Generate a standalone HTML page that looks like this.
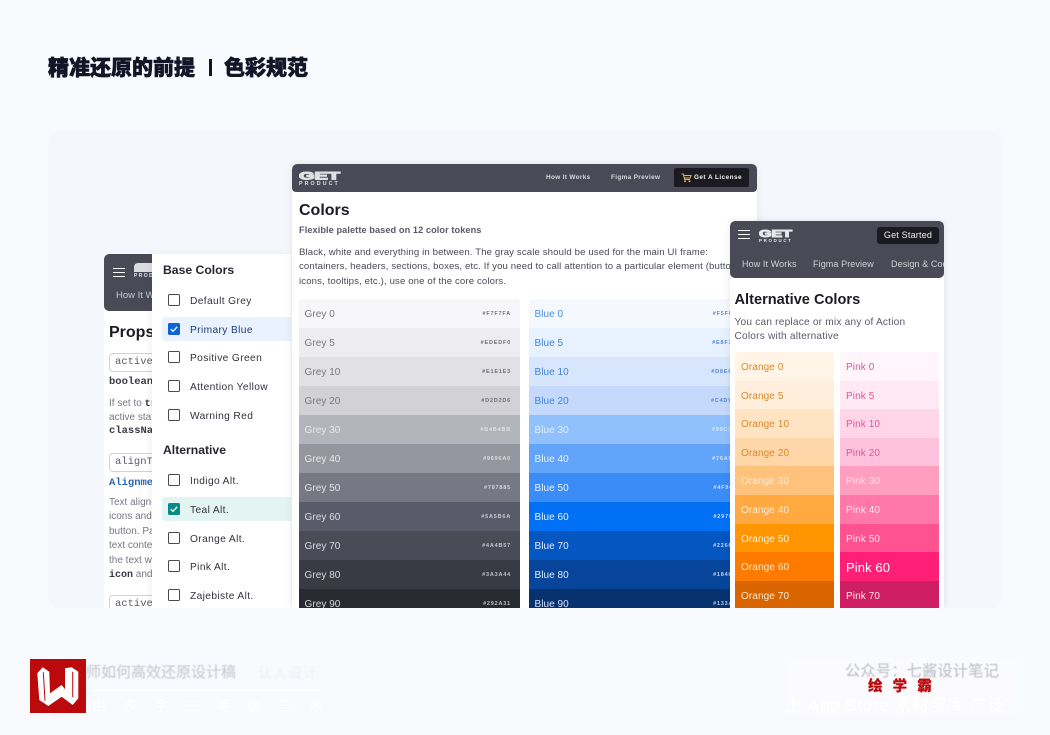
<!DOCTYPE html>
<html lang="zh"><head><meta charset="utf-8"><title>色彩规范</title>
<style>
*{margin:0;padding:0;box-sizing:border-box}
html,body{width:1050px;height:735px;overflow:hidden;background:#f9fafe}
body{position:relative;font-family:"Liberation Sans","Noto Sans CJK SC",sans-serif;color:#1b1b22}
.a{position:absolute;white-space:nowrap}
.panel{position:absolute;left:48px;top:131px;width:954px;height:477px;background:#f6f7fc;border-radius:12px;overflow:hidden}
.card{position:absolute;background:#fff;overflow:hidden}
.hd{position:absolute;background:#4a4a57;border-radius:5px}
.row{position:absolute;height:29px;font-size:10px;line-height:31px;padding-left:5.5px;letter-spacing:.05px}
.row b{position:absolute;right:9px;top:0;font-size:5.5px;letter-spacing:.8px;font-weight:700;opacity:.85}
.w .row{line-height:32px;padding-left:6px;font-size:10px;letter-spacing:.1px}
.cb{position:absolute;left:16px;width:12px;height:12px;border:1.3px solid #4a4a57;border-radius:1.5px;background:#fff}
.lb{position:absolute;left:38px;font-size:10.2px;letter-spacing:.38px;color:#32323c;line-height:14px}
.sel{position:absolute;left:10px;width:129px;height:24px;border-radius:3px 0 0 3px}
.mono{font-family:"Liberation Mono",monospace}
.pill{position:absolute;left:5px;width:70px;height:19px;border:1px solid #d2d2d6;border-radius:4px;font-family:"Liberation Mono",monospace;font-size:10.5px;color:#5a5a6a;padding-left:5px;line-height:17px}
.t{position:absolute;left:5px;font-size:10px;color:#787885;line-height:14px;white-space:nowrap}
</style></head><body>

<div class="a" style="left:48px;top:53px;font-size:21px;line-height:28px;font-weight:900;color:#111526;-webkit-text-stroke:.6px #111526;font-family:'Noto Sans CJK SC',sans-serif">精准还原的前提</div>
<div class="a" style="left:209px;top:59px;width:3px;height:17px;background:#111526"></div>
<div class="a" style="left:224px;top:53px;font-size:21px;line-height:28px;font-weight:900;color:#111526;-webkit-text-stroke:.6px #111526;font-family:'Noto Sans CJK SC',sans-serif">色彩规范</div>

<div class="panel">
<!-- left card -->
<div class="card" style="left:56px;top:123px;width:120px;height:354px;border-radius:5px 0 0 0">
  <div class="hd" style="left:0;top:0;width:120px;height:57px"></div>
  <div class="a" style="left:9px;top:14px;width:12px;height:9px;border-top:1.3px solid #fff;border-bottom:1.3px solid #fff"></div>
  <div class="a" style="left:9px;top:18px;width:12px;height:1.3px;background:#fff"></div>
  <div class="a" style="left:30px;top:9px;width:24px;height:9px;background:#dcdce0;border-radius:4px 1px 0 0"></div>
  <div class="a" style="left:30px;top:19px;font-size:5px;font-weight:700;letter-spacing:1.4px;color:#e1e1e3">PRODUCT</div>
  <div class="a" style="left:12px;top:36px;font-size:9.5px;color:#c9c9d0">How It Works</div>
  <div class="a" style="left:5px;top:69px;font-size:16px;font-weight:700;line-height:20px;color:#1b1b22">Props</div>
  <div class="pill" style="top:99px">active</div>
  <div class="a mono" style="left:5px;top:122px;font-size:10.5px;font-weight:700;color:#3a3a44">boolean</div>
  <div class="t" style="top:143px">If set to <b class="mono" style="color:#3a3a44">true</b></div>
  <div class="t" style="top:157px">active state</div>
  <div class="a mono" style="left:5px;top:171px;font-size:10.5px;font-weight:700;color:#3a3a44">className</div>
  <div class="pill" style="top:199px">alignText</div>
  <div class="a mono" style="left:5px;top:223px;font-size:10.5px;font-weight:700;color:#2b66b8">Alignment</div>
  <div class="t" style="top:242px">Text alignment</div>
  <div class="t" style="top:256px">icons and</div>
  <div class="t" style="top:271px">button. Pass</div>
  <div class="t" style="top:285px">text content</div>
  <div class="t" style="top:300px">the text will</div>
  <div class="t" style="top:314px"><b class="mono" style="color:#3a3a44">icon</b> and</div>
  <div class="pill" style="top:341px">active</div>
</div>

<!-- sidebar -->
<div class="card" style="left:104px;top:123px;width:139px;height:354px;box-shadow:-2px 0 6px rgba(60,60,80,.07)">
  <div class="a" style="left:11px;top:9px;font-size:12.2px;font-weight:700;line-height:15px;color:#26262e">Base Colors</div>
  <div class="cb" style="top:40px"></div><div class="lb" style="top:41px">Default Grey</div>
  <div class="sel" style="top:63px;background:#e9f2fe"></div>
  <div class="cb" style="top:69px;background:#0f62d6;border-color:#0f62d6"><svg width="10" height="10" viewBox="0 0 10 10" style="position:absolute;left:0;top:0"><path d="M1.8 5.2 4 7.3 8.2 2.8" fill="none" stroke="#fff" stroke-width="1.3"/></svg></div><div class="lb" style="top:70px;color:#1f3f75">Primary Blue</div>
  <div class="cb" style="top:97px"></div><div class="lb" style="top:98px">Positive Green</div>
  <div class="cb" style="top:126px"></div><div class="lb" style="top:127px">Attention Yellow</div>
  <div class="cb" style="top:155px"></div><div class="lb" style="top:156px">Warning Red</div>
  <div class="a" style="left:11px;top:189px;font-size:12.2px;font-weight:700;line-height:15px;color:#26262e">Alternative</div>
  <div class="cb" style="top:220px"></div><div class="lb" style="top:221px">Indigo Alt.</div>
  <div class="sel" style="top:243px;background:#e3f5f3"></div>
  <div class="cb" style="top:249px;background:#0c8a85;border-color:#0c8a85"><svg width="10" height="10" viewBox="0 0 10 10" style="position:absolute;left:0;top:0"><path d="M1.8 5.2 4 7.3 8.2 2.8" fill="none" stroke="#fff" stroke-width="1.3"/></svg></div><div class="lb" style="top:250px">Teal Alt.</div>
  <div class="cb" style="top:278px"></div><div class="lb" style="top:279px">Orange Alt.</div>
  <div class="cb" style="top:306px"></div><div class="lb" style="top:307px">Pink Alt.</div>
  <div class="cb" style="top:335px"></div><div class="lb" style="top:336px">Zajebiste Alt.</div>
</div>

<!-- center card -->
<div class="card" style="left:244px;top:33px;width:465px;height:444px;border-radius:5px 5px 0 0;box-shadow:0 0 8px rgba(60,60,80,.1)">
  <div class="hd" style="left:0;top:0;width:465px;height:28px;border-radius:5px 5px 4px 4px"></div>
  <svg class="a" style="left:7px;top:5px" width="42" height="12" viewBox="0 0 42 12"><text x="0" y="10.5" font-family="Liberation Sans" font-size="11" font-weight="700" fill="#e1e1e3" stroke="#e1e1e3" stroke-width="1.1" textLength="41" lengthAdjust="spacingAndGlyphs">GET</text></svg>
  <div class="a" style="left:7px;top:17px;font-size:5.3px;line-height:7px;font-weight:700;letter-spacing:2.1px;color:#e1e1e3">PRODUCT</div>
  <div class="a" style="left:254px;top:10px;font-size:6.4px;line-height:8px;font-weight:700;letter-spacing:.35px;color:#d8d8de">How It Works</div>
  <div class="a" style="left:319px;top:10px;font-size:6.4px;line-height:8px;font-weight:700;letter-spacing:.35px;color:#d8d8de">Figma Preview</div>
  <div class="a" style="left:382px;top:4px;width:75px;height:19px;background:#1a1a20;border-radius:2px"></div>
  <svg class="a" style="left:389px;top:9px" width="11" height="10" viewBox="0 0 11 10"><path d="M.5 1H2.3L3.6 6.5H9M2.7 2.5H10L9.2 5H3.3" fill="none" stroke="#e8b44a" stroke-width="1"/><circle cx="4" cy="8.3" r="1" fill="#e8b44a"/><circle cx="8.5" cy="8.3" r="1" fill="#e8b44a"/></svg>
  <div class="a" style="left:402px;top:10px;font-size:6.4px;line-height:8px;font-weight:700;letter-spacing:.45px;color:#f0f0f2">Get A License</div>
  <div class="a" style="left:7px;top:37px;font-size:16px;line-height:20px;font-weight:700;color:#1b1b22">Colors</div>
  <div class="a" style="left:7px;top:60px;font-size:9.2px;line-height:12px;font-weight:700;color:#5a5a6a;letter-spacing:.08px">Flexible palette based on 12 color tokens</div>
  <div class="a" style="left:7px;top:82px;font-size:9.6px;line-height:14.4px;color:#4a4a57;letter-spacing:.13px">Black, white and everything in between. The gray scale should be used for the main UI frame:<br>containers, headers, sections, boxes, etc. If you need to call attention to a particular element (buttons,<br>icons, tooltips, etc.), use one of the core colors.</div>

  <div class="a" style="left:7px;top:135px;width:221px;height:309px;overflow:hidden;border-radius:3px 3px 0 0">
    <div class="row" style="top:0;width:221px;background:#f7f7fa;color:#787885">Grey 0<b style="color:#5a5a6a">#F7F7FA</b></div>
    <div class="row" style="top:29px;width:221px;background:#edEDf0;color:#787885">Grey 5<b style="color:#5a5a6a">#EDEDF0</b></div>
    <div class="row" style="top:58px;width:221px;background:#e1e1e3;color:#787885">Grey 10<b style="color:#5a5a6a">#E1E1E3</b></div>
    <div class="row" style="top:87px;width:221px;background:#d2d2d6;color:#787885">Grey 20<b style="color:#5a5a6a">#D2D2D6</b></div>
    <div class="row" style="top:116px;width:221px;background:#b4b4bb;color:#e8e8ed">Grey 30<b>#B4B4BB</b></div>
    <div class="row" style="top:145px;width:221px;background:#9696a0;color:#e6e6ea">Grey 40<b>#9696A0</b></div>
    <div class="row" style="top:174px;width:221px;background:#787885;color:#e2e2e6">Grey 50<b>#787885</b></div>
    <div class="row" style="top:203px;width:221px;background:#5a5b6a;color:#dcdce2">Grey 60<b>#5A5B6A</b></div>
    <div class="row" style="top:232px;width:221px;background:#4a4b57;color:#dcdce2">Grey 70<b>#4A4B57</b></div>
    <div class="row" style="top:261px;width:221px;background:#3a3a44;color:#d8d8de">Grey 80<b>#3A3A44</b></div>
    <div class="row" style="top:290px;width:221px;background:#292a31;color:#d8d8de">Grey 90<b>#292A31</b></div>
  </div>
  <div class="a" style="left:237px;top:135px;width:221px;height:309px;overflow:hidden;border-radius:3px 3px 0 0">
    <div class="row" style="top:0;width:221px;background:#f5f8ff;color:#4a8ee6">Blue 0<b style="color:#3a78d0">#F5F8FF</b></div>
    <div class="row" style="top:29px;width:221px;background:#e8f1fe;color:#3f84e0">Blue 5<b style="color:#3a78d0">#E8F1FE</b></div>
    <div class="row" style="top:58px;width:221px;background:#d8e6fd;color:#3f84e0">Blue 10<b style="color:#3a78d0">#D8E6FD</b></div>
    <div class="row" style="top:87px;width:221px;background:#c4d9fc;color:#3f84e0">Blue 20<b style="color:#3a78d0">#C4D9FC</b></div>
    <div class="row" style="top:116px;width:221px;background:#90c1fc;color:#e0eeff">Blue 30<b>#90C1FC</b></div>
    <div class="row" style="top:145px;width:221px;background:#62a4fa;color:#e6f0ff">Blue 40<b>#76A9FA</b></div>
    <div class="row" style="top:174px;width:221px;background:#3c8cf8;color:#e6f0ff">Blue 50<b>#4F94F8</b></div>
    <div class="row" style="top:203px;width:221px;background:#0270f5;color:#e6f0ff">Blue 60<b>#2979FF</b></div>
    <div class="row" style="top:232px;width:221px;background:#0556c0;color:#dfeaff">Blue 70<b>#2266C0</b></div>
    <div class="row" style="top:261px;width:221px;background:#06459a;color:#dfeaff">Blue 80<b>#1846A0</b></div>
    <div class="row" style="top:290px;width:221px;background:#07316f;color:#d8e4fa">Blue 90<b>#133A70</b></div>
  </div>
</div>

<!-- right card -->
<div class="card" style="left:682px;top:90px;width:214px;height:387px;border-radius:5px 5px 0 0;box-shadow:0 0 7px rgba(60,60,80,.12)">
  <div class="hd" style="left:0;top:0;width:214px;height:57px"></div>
  <div class="a" style="left:8px;top:9px;width:12px;height:9px;border-top:1.2px solid #fff;border-bottom:1.2px solid #fff"></div>
  <div class="a" style="left:8px;top:13px;width:12px;height:1.2px;background:#fff"></div>
  <svg class="a" style="left:29px;top:7px" width="34" height="10" viewBox="0 0 34 10"><text x="0" y="9" font-family="Liberation Sans" font-size="10" font-weight="700" fill="#e8e8ec" stroke="#e8e8ec" stroke-width="1" textLength="33" lengthAdjust="spacingAndGlyphs">GET</text></svg>
  <div class="a" style="left:29px;top:17px;font-size:4.4px;line-height:6px;font-weight:700;letter-spacing:1.7px;color:#e8e8ec">PRODUCT</div>
  <div class="a" style="left:147px;top:6px;width:62px;height:17px;background:#1a1a20;border-radius:3px;color:#f0f0f2;font-size:9px;line-height:16px;text-align:center;letter-spacing:.2px">Get Started</div>
  <div class="a" style="left:12px;top:37px;font-size:9px;line-height:12px;letter-spacing:.1px;color:#d2d2d8">How It Works</div>
  <div class="a" style="left:83px;top:37px;font-size:9px;line-height:12px;letter-spacing:.1px;color:#d2d2d8">Figma Preview</div>
  <div class="a" style="left:161px;top:37px;font-size:9px;line-height:12px;letter-spacing:.1px;color:#d2d2d8;width:53px;overflow:hidden">Design &amp; Code</div>
  <div class="a" style="left:4.5px;top:69px;font-size:14.6px;line-height:18px;font-weight:700;color:#1b1b22;padding-top:1px">Alternative Colors</div>
  <div class="a" style="left:4.5px;top:94px;font-size:10.1px;line-height:14.4px;letter-spacing:.22px;color:#5a5a6a;padding-top:1px">You can replace or mix any of Action<br>Colors with alternative</div>

  <div class="a w" style="left:5px;top:131px;width:99px;height:256px;overflow:hidden;border-radius:3px 3px 0 0">
    <div class="row" style="top:0;width:99px;height:29px;background:#fff4e6;color:#d98a2e">Orange 0</div>
    <div class="row" style="top:28.6px;width:99px;background:#ffeedb;color:#d98a2e">Orange 5</div>
    <div class="row" style="top:57.2px;width:99px;background:#ffe3c2;color:#d98a2e">Orange 10</div>
    <div class="row" style="top:85.8px;width:99px;background:#ffd6a8;color:#d98a2e">Orange 20</div>
    <div class="row" style="top:114.4px;width:99px;background:#ffc27c;color:#ffe9cf">Orange 30</div>
    <div class="row" style="top:143px;width:99px;background:#ffa940;color:#ffeeda">Orange 40</div>
    <div class="row" style="top:171.6px;width:99px;background:#ff9500;color:#fff0dc">Orange 50</div>
    <div class="row" style="top:200.2px;width:99px;background:#ff7b00;color:#ffe6c8">Orange 60</div>
    <div class="row" style="top:228.8px;width:99px;background:#d96500;color:#ffe6c8">Orange 70</div>
  </div>
  <div class="a w" style="left:110px;top:131px;width:99px;height:256px;overflow:hidden;border-radius:3px 3px 0 0">
    <div class="row" style="top:0;width:99px;background:#fff5fa;color:#e0569a">Pink 0</div>
    <div class="row" style="top:28.6px;width:99px;background:#ffe9f3;color:#e0569a">Pink 5</div>
    <div class="row" style="top:57.2px;width:99px;background:#ffd6e8;color:#e0569a">Pink 10</div>
    <div class="row" style="top:85.8px;width:99px;background:#ffc2dc;color:#e0569a">Pink 20</div>
    <div class="row" style="top:114.4px;width:99px;background:#ff9ebf;color:#ffe3ee">Pink 30</div>
    <div class="row" style="top:143px;width:99px;background:#ff78a8;color:#ffe8f1">Pink 40</div>
    <div class="row" style="top:171.6px;width:99px;background:#ff5290;color:#ffe8f1">Pink 50</div>
    <div class="row" style="top:200.2px;width:99px;background:#ff1f76;color:#fff;font-size:13px">Pink 60</div>
    <div class="row" style="top:228.8px;width:99px;background:#d01e64;color:#ffe8f1">Pink 70</div>
  </div>
</div>
</div>

<!-- footer -->
<div class="a" style="left:785px;top:657px;width:235px;height:60px;background:rgba(255,255,255,.3);filter:blur(3px)"></div>
<div class="a" style="left:86px;top:664px;font-size:15px;line-height:18px;color:#c4c6ce;filter:blur(.5px)">师如何高效还原设计稿</div>
<div class="a" style="left:258px;top:664px;font-size:14px;line-height:18px;color:#eef0f6;letter-spacing:1px;filter:blur(.5px)">认人设计</div>
<div class="a" style="left:92px;top:690px;width:228px;height:1px;background:#fff"></div>
<div class="a" style="left:92px;top:697px;font-size:14px;line-height:18px;color:#fff;letter-spacing:17px">由表字三等级三余</div>
<svg class="a" style="left:30px;top:659px" width="56" height="54" viewBox="0 0 56 54"><rect width="56" height="54" fill="#bb0a0c"/><path d="M7.3 14.3 12.7 8.3 19.3 12.7 20 34.3 31.7 26 35 30.3V9.3L41.7 8.3 48.3 12.7V39.3L42.7 46 31.7 37.7 18.3 47 9.3 41Z" fill="#fff"/><path d="M13.3 13.3 15 41.7M42.7 12.7V38" stroke="#bb0a0c" stroke-width="1" fill="none"/></svg>
<div class="a" style="left:845px;top:663px;font-size:15.3px;line-height:18px;color:#b9bbc4;letter-spacing:.1px;filter:blur(.4px)">公众号：七酱设计笔记</div>
<div class="a" style="left:868px;top:677px;font-size:14.5px;line-height:18px;font-weight:900;color:#bb0a0c;letter-spacing:3.4px;-webkit-text-stroke:.2px #bb0a0c;font-family:'Noto Sans CJK SC',sans-serif">绘 学 霸</div>
<div class="a" style="left:785px;top:695px;font-size:17px;line-height:22px;color:#fff;letter-spacing:.6px">上 App Store 素材宝库 广泛</div>
</body></html>
